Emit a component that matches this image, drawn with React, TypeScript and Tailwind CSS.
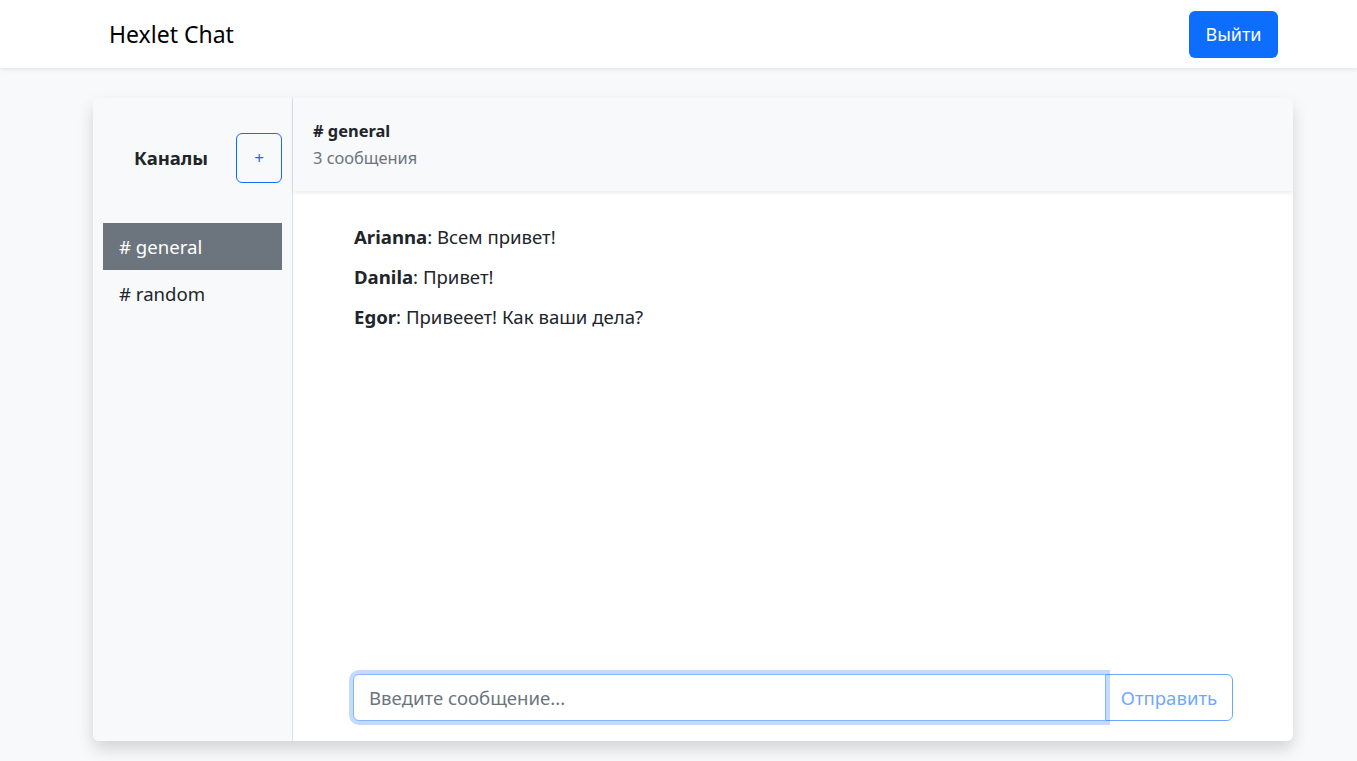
export default function App() {
  const font = { fontFamily: '"Noto Sans", "Open Sans", sans-serif' };
  return (
    <div className="min-h-screen bg-[#f8f9fa] text-[#212529]" style={font}>
      {/* Navbar */}
      <nav className="h-[68px] bg-white shadow-[0_2px_4px_rgba(0,0,0,0.075)] flex items-center">
        <div className="ml-[109px] w-[1169px] flex items-center justify-between">
          <span className="text-[23px] text-black">Hexlet Chat</span>
          <button className="h-[47px] w-[89px] rounded-[6px] bg-[#0d6efd] text-white text-[18px]">Выйти</button>
        </div>
      </nav>

      {/* Chat card */}
      <div className="mt-[30px] ml-[93px] w-[1200px] h-[643px] flex rounded-[6px] overflow-hidden bg-white shadow-[0_8px_16px_rgba(0,0,0,0.15)]">
        {/* Channels */}
        <aside className="w-[200px] shrink-0 bg-[#f8f9fa] border-r border-[#dee2e6] flex flex-col">
          <div className="mt-[35px] mb-[40px] pl-[41px] pr-[10px] flex items-center justify-between">
            <b className="text-[18.5px]">Каналы</b>
            <button className="w-[46px] h-[50px] rounded-[6px] border border-[#0d6efd] text-[#0d6efd] text-[17px]">+</button>
          </div>
          <ul className="px-[10px] flex flex-col">
            <li className="h-[47px] pl-4 flex items-center bg-[#6c757d] text-white text-[18.6px]"># general</li>
            <li className="h-[47px] pl-4 flex items-center text-[18.6px]"># random</li>
          </ul>
        </aside>

        {/* Messages */}
        <section className="flex-1 flex flex-col">
          <div className="h-[93px] bg-[#f8f9fa] shadow-[0_2px_4px_rgba(0,0,0,0.075)] pl-5 pt-[21px]">
            <p className="font-bold text-[16.4px] leading-6"># general</p>
            <p className="text-[16.4px] leading-6 text-[#6c757d] mt-[3px]">3 сообщения</p>
          </div>
          <div className="flex-1 px-[61px] pt-[34px] flex flex-col gap-4 text-[18.6px] leading-6">
            <div><b>Arianna</b>: Всем привет!</div>
            <div><b>Danila</b>: Привет!</div>
            <div><b>Egor</b>: Привееет! Как ваши дела?</div>
          </div>
          <div className="pl-[60px] pr-[60px] pb-[20px]">
            <div className="flex h-[47px]">
              <div className="relative flex-1 z-10">
                <input
                  placeholder="Введите сообщение..."
                  className="w-full h-full rounded-l-[6px] border border-[#86b7fe] bg-white pl-[15px] pr-4 text-[18.6px] outline-none shadow-[0_0_0_4px_rgba(13,110,253,0.25)] placeholder:text-[#6c757d]"
                  style={font}
                />
              </div>
              <button className="w-[128px] -ml-px rounded-r-[6px] border border-[#0d6efd] text-[#0d6efd] opacity-60 text-[18.6px]">Отправить</button>
            </div>
          </div>
        </section>
      </div>
    </div>
  );
}
